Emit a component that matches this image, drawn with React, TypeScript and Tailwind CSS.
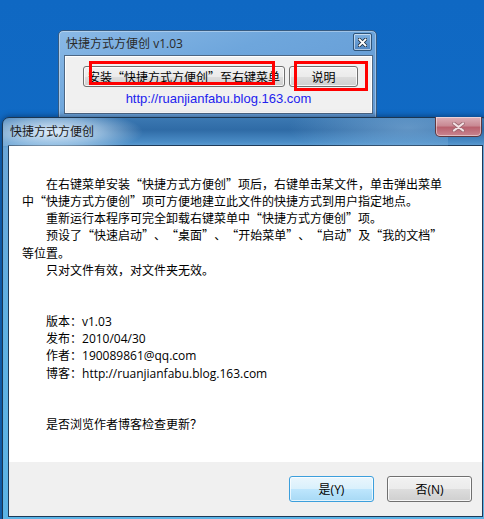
import React from "react";

const lines: { t: string; i: boolean }[] = [
  { t: "在右键菜单安装“快捷方式方便创”项后，右键单击某文件，单击弹出菜单", i: true },
  { t: "中“快捷方式方便创”项可方便地建立此文件的快捷方式到用户指定地点。", i: false },
  { t: "重新运行本程序可完全卸载右键菜单中“快捷方式方便创”项。", i: true },
  { t: "预设了“快速启动”、“桌面”、“开始菜单”、“启动”及“我的文档”", i: true },
  { t: "等位置。", i: false },
  { t: "只对文件有效，对文件夹无效。", i: true },
  { t: "", i: false },
  { t: "", i: false },
  { t: "版本：v1.03", i: true },
  { t: "发布：2010/04/30", i: true },
  { t: "作者：190089861@qq.com", i: true },
  { t: "博客：http://ruanjianfabu.blog.163.com", i: true },
  { t: "", i: false },
  { t: "", i: false },
  { t: "是否浏览作者博客检查更新？", i: true },
];

function Rich({ text }: { text: string }) {
  const parts = text.match(/[“”]|[\x20-\x7e]+|[^“”\x20-\x7e]+/g) || [];
  return (
    <>
      {parts.map((p, k) => {
        if (p === "“" || p === "”") {
          return (
            <span key={k} className="font-['Noto_Sans_CJK_SC',sans-serif] [font-feature-settings:'fwid']">
              {p}
            </span>
          );
        }
        if (/^[\x20-\x7e]+$/.test(p)) {
          return (
            <span key={k} className="font-['Open_Sans',sans-serif]">
              {p}
            </span>
          );
        }
        return <span key={k}>{p}</span>;
      })}
    </>
  );
}

function SmallClose() {
  return (
    <div className="absolute left-[294px] top-[2px] w-[19px] h-[18px] rounded-[2px] border border-[#2f5478] bg-[linear-gradient(180deg,#7fb0e0,#4f86c2)] shadow-[inset_0_0_0_1px_rgba(255,255,255,0.55)] flex items-center justify-center">
      <svg width="9" height="9" viewBox="0 0 9 9">
        <path d="M1.5 1.5 L7.5 7.5 M7.5 1.5 L1.5 7.5" stroke="#203040" strokeWidth="3.4" strokeLinecap="square" />
        <path d="M1.5 1.5 L7.5 7.5 M7.5 1.5 L1.5 7.5" stroke="#ffffff" strokeWidth="1.8" strokeLinecap="square" />
      </svg>
    </div>
  );
}

function BigClose() {
  return (
    <div className="absolute left-[432px] top-[-1px] w-[47px] h-[20px] rounded-b-[5px] border border-t-0 border-[#5e3840] bg-[linear-gradient(180deg,#dcb0b8_0%,#c98a94_45%,#b9616e_55%,#c98591_100%)] shadow-[inset_0_0_0_1px_rgba(255,255,255,0.45)] flex items-center justify-center">
      <svg width="13" height="10" viewBox="0 0 13 10">
        <path d="M2 1.5 L11 8.5 M11 1.5 L2 8.5" stroke="#9a6870" strokeWidth="3.6" strokeLinecap="round" />
        <path d="M2 1.5 L11 8.5 M11 1.5 L2 8.5" stroke="#f4e2e5" strokeWidth="2.2" strokeLinecap="round" />
      </svg>
    </div>
  );
}

export default function App() {
  return (
    <div className="relative w-[484px] h-[519px] overflow-hidden bg-[linear-gradient(180deg,#0f68c3,#1570c8)] font-['Noto_Sans_CJK_SC',sans-serif] text-[12px] text-black [text-spacing-trim:space-all]">
      {/* small window */}
      <div className="absolute left-[58px] top-[30px] w-[319px] h-[95px] rounded-t-[5px] border border-[#365b82] bg-[linear-gradient(160deg,#8ab9e6_0%,#6ea6dc_40%,#6199d4_100%)] shadow-[inset_0_0_0_1px_rgba(255,255,255,0.35)] flex flex-col">
        <div className="relative h-[24px] flex items-center pl-[7px] text-[#2a2a2a] text-[12px]">
          <span className="leading-none">
            <Rich text="快捷方式方便创 v1.03" />
          </span>
          <SmallClose />
        </div>
        <div className="ml-[5px] mr-[3px] h-[59px] border border-[#4d6784] bg-[#f0f0f0] shadow-[inset_0_0_0_1px_#ffffff] flex flex-col">
          <div className="flex gap-[4px] mt-[10px] ml-[18px]">
            <div className="w-[202px] h-[21px] rounded-[3px] border border-[#707070] bg-[linear-gradient(180deg,#f2f2f2_0%,#ebebeb_50%,#dddddd_50%,#cfcfcf_100%)] shadow-[inset_0_0_0_1px_rgba(255,255,255,0.8)] flex items-center justify-center">
              <span className="text-[12px] leading-none whitespace-nowrap">
                <Rich text="安装“快捷方式方便创”至右键菜单" />
              </span>
            </div>
            <div className="w-[69px] h-[21px] rounded-[3px] border border-[#707070] bg-[linear-gradient(180deg,#f2f2f2_0%,#ebebeb_50%,#dddddd_50%,#cfcfcf_100%)] shadow-[inset_0_0_0_1px_rgba(255,255,255,0.8)] flex items-center justify-center">
              <span className="text-[12px] leading-none">说明</span>
            </div>
          </div>
          <div className="mt-[4px] text-center text-[13px] leading-[16px] text-[#2222ee] font-['Liberation_Sans',sans-serif]">
            http://ruanjianfabu.blog.163.com
          </div>
        </div>
      </div>

      {/* red highlight boxes */}
      <div className="absolute left-[89px] top-[61px] w-[186px] h-[24px] border-[3px] border-[#ff0000]" />
      <div className="absolute left-[294px] top-[61px] w-[74px] h-[30px] border-[3px] border-[#ff0000]" />

      {/* big dialog */}
      <div className="absolute left-[2px] top-[117px] w-[487px] h-[408px] rounded-t-[7px] border border-[#1b3550] bg-[linear-gradient(180deg,#3b78b2_0px,#2f6ba6_12px,#4a8cc6_24px,#6aa6d8_30px,#5fb0e2_200px,#5cb4e6_100%)] shadow-[0_0_6px_rgba(0,20,50,0.6)] flex flex-col">
        <div className="relative h-[27px] flex items-center pl-[7px] pb-[1px]">
          <div className="absolute left-0 top-0 w-[200px] h-[28px] rounded-tl-[6px] bg-[radial-gradient(ellipse_90px_22px_at_50px_14px,rgba(235,245,255,0.95),rgba(200,225,245,0.6)_55%,transparent_100%)]" />
          <div className="absolute right-[40px] top-0 w-[160px] h-[28px] bg-[radial-gradient(ellipse_120px_30px_at_120px_10px,rgba(160,200,235,0.45),transparent_100%)]" />
          <span className="relative text-[12px] leading-none text-[#1a1a1a]">快捷方式方便创</span>
          <BigClose />
        </div>
        <div className="mx-[5px] w-[475px] h-[372px] border border-[#1e3a58] bg-white flex flex-col">
          <div className="h-[316px] pt-[29px] pl-[13px]">
            {lines.map((l, k) => (
              <div key={k} className={`h-[17.15px] leading-[17.15px] whitespace-nowrap ${l.i ? "pl-[24px]" : ""}`}>
                <Rich text={l.t} />
              </div>
            ))}
          </div>
          <div className="flex-1 bg-[#f0f0f0] flex justify-end gap-[13px] pt-[14px] pr-[10px]">
            <div className="w-[85px] h-[26px] rounded-[3px] border border-[#3c9fdc] bg-[linear-gradient(180deg,#eaf6fd_0%,#d9f0fc_50%,#bee6fd_50%,#a7d9f5_100%)] shadow-[inset_0_0_0_1px_rgba(255,255,255,0.7)] flex items-center justify-center">
              <span className="text-[12px] leading-none">
                <Rich text="是(Y)" />
              </span>
            </div>
            <div className="w-[85px] h-[26px] rounded-[3px] border border-[#707070] bg-[linear-gradient(180deg,#f2f2f2_0%,#ebebeb_50%,#dddddd_50%,#cfcfcf_100%)] shadow-[inset_0_0_0_1px_rgba(255,255,255,0.8)] flex items-center justify-center">
              <span className="text-[12px] leading-none">
                <Rich text="否(N)" />
              </span>
            </div>
          </div>
        </div>
      </div>
    </div>
  );
}
